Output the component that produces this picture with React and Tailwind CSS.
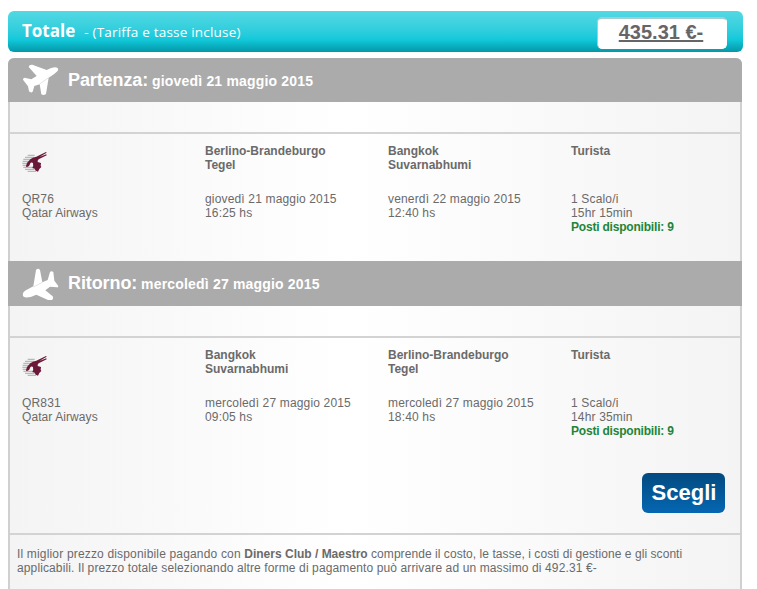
import React from 'react';

const flights = [
    {
        id: 'out',
        label: 'Partenza:',
        date: 'giovedì 21 maggio 2015',
        code: 'QR76',
        airline: 'Qatar Airways',
        from: ['Berlino-Brandeburgo', 'Tegel'],
        to: ['Bangkok', 'Suvarnabhumi'],
        departure: ['giovedì 21 maggio 2015', '16:25 hs'],
        arrival: ['venerdì 22 maggio 2015', '12:40 hs'],
        cabin: 'Turista',
        stops: '1 Scalo/i',
        duration: '15hr 15min',
        seats: 9,
    },
    {
        id: 'back',
        label: 'Ritorno:',
        date: 'mercoledì 27 maggio 2015',
        code: 'QR831',
        airline: 'Qatar Airways',
        from: ['Bangkok', 'Suvarnabhumi'],
        to: ['Berlino-Brandeburgo', 'Tegel'],
        departure: ['mercoledì 27 maggio 2015', '09:05 hs'],
        arrival: ['mercoledì 27 maggio 2015', '18:40 hs'],
        cabin: 'Turista',
        stops: '1 Scalo/i',
        duration: '14hr 35min',
        seats: 9,
    },
];

const TakeOffIcon = () => (
    <svg className="h-[32px] w-[37px]" viewBox="0 0 111 96" fill="#fff">
        <path d="M107 12 Q111 17 106 22 Q98 31 80 41 L72 90 Q65 96 58 91 L53 61 L37 66 L32 83 Q27 88 21 82 L18 67 L3 47 Q4 39 11 42 L28 46 L44 36 L20 9 Q21 1 31 2 L74 18 Q97 5 107 12 Z" />
        <path d="M53 60 L80 41" stroke="#c8c8c8" strokeWidth="1.5" fill="none" />
    </svg>
);

const LandingIcon = () => (
    <svg className="h-[32px] w-[37px]" viewBox="0 0 111 96" fill="#fff">
        <path d="M3 83 Q0 73 13 66 L34 55 L42 6 Q48 -1 54 6 L61 43 L77 36 L84 12 Q89 7 94 12 L97 38 L109 54 Q109 59 104 58 L84 56 L70 67 L92 85 Q96 93 89 96 L78 96 L43 80 Q23 90 9 88 Q4 87 3 83 Z" />
        <path d="M34 57 L61 43" stroke="#c8c8c8" strokeWidth="1.5" fill="none" />
    </svg>
);

const QatarLogo = () => (
    <svg className="h-[22px] w-[26px]" viewBox="0 0 78 66">
        <path
            d="M17 13 H38 M9 19 H35 M4 25 H30 M2 31 H24 M1 37 H22 M2 43 H18 M4 49 H34 M9 55 H38 M17 61 H42"
            stroke="#b4bab8"
            strokeWidth="3.5"
        />
        <path
            d="M12 46 Q14 34 25 25 Q34 17 43 17 L72 3 L74 5 L52 18 L73 10 L74 13 L50 25 Q46 28 47 33 L57 36 L56 44 L58 48 L52 54 L48 62 L41 59 L38 53 L31 51 Q35 44 33 36 Q28 32 24 38 Q23 46 13 48 Z"
            fill="#6b1738"
        />
    </svg>
);

const FlightHeader = ({ flight }) => (
    <div className={`-mx-[2px] flex items-center bg-[#ababab] pl-[14px] text-white ${flight.id === 'out' ? 'h-[44px] rounded-t-[6px]' : 'h-[45px]'}`}>
        {flight.id === 'out' ? <TakeOffIcon /> : <LandingIcon />}
        <h2 className="ml-[9px] text-[18px] leading-[22px] font-bold tracking-[-0.1px]">
            {flight.label} <span className="-ml-px text-[14px] tracking-[0.18px]">{flight.date}</span>
        </h2>
    </div>
);

const Lines = ({ lines }) => lines.map((line) => <p key={line}>{line}</p>);

const FlightRow = ({ flight }) => (
    <div className="grid grid-cols-[183px_183px_183px_1fr] pt-[10px] pl-[12px] tracking-[0.16px]">
        <div>
            <div className="h-[48px] pt-[7px]">
                <QatarLogo />
            </div>
            <p>{flight.code}</p>
            <p className="tracking-[0.08px]">{flight.airline}</p>
        </div>
        <div>
            <div className="h-[48px] font-bold tracking-normal">
                <Lines lines={flight.from} />
            </div>
            <Lines lines={flight.departure} />
        </div>
        <div>
            <div className="h-[48px] font-bold tracking-normal">
                <Lines lines={flight.to} />
            </div>
            <Lines lines={flight.arrival} />
        </div>
        <div>
            <div className="h-[48px] font-bold tracking-normal">{flight.cabin}</div>
            <p>{flight.stops}</p>
            <p>{flight.duration}</p>
            <p className="font-bold tracking-[-0.2px] text-[#20853a]">Posti disponibili: {flight.seats}</p>
        </div>
    </div>
);

const App = () => {
    return (
        <div className="h-[589px] overflow-hidden bg-white pt-[11px] pl-[8px] font-['Liberation_Sans',Arial,sans-serif] text-[12px] leading-[14px] text-[#6a6a6a]">
            {/* Total bar */}
            <div className="flex h-[41px] w-[735px] items-center justify-between rounded-[6px] bg-linear-to-b from-[#52d8e3] via-[#10c9da] via-70% to-[#0597a8] pr-[16px] pl-[14px]">
                <p className="font-['Open_Sans','Noto_Sans',sans-serif] text-white">
                    <span className="text-[17px] font-bold">Totale</span>
                    <span className="ml-[9px] text-[13.5px] font-medium tracking-[0.2px]">- (Tariffa e tasse incluse)</span>
                </p>
                <div className="mt-[2px] h-[32px] w-[130px] rounded-[5px] border border-t-2 border-[#a5cdd1] border-r-white border-b-white bg-white pr-[2px] text-center text-[20px] leading-[27px] font-bold text-[#666]">
                    <span className="underline">435.31 €-</span>
                </div>
            </div>

            {/* Flights */}
            <div className="mt-[6px] h-[540px] w-[734px] rounded-t-[6px] border-x-2 border-[#d0d0d0] bg-linear-to-r from-[#f4f4f4] via-white via-46% to-[#f4f4f4]">
                {flights.map((flight) => (
                    <section key={flight.id}>
                        <FlightHeader flight={flight} />
                        <div className="h-[32px] border-b-2 border-[#d3d3d3]" />
                        <div className={flight.id === 'out' ? 'h-[127px]' : 'h-[135px]'}>
                            <FlightRow flight={flight} />
                        </div>
                    </section>
                ))}

                <div className="flex h-[62px] justify-end border-b-2 border-[#d3d3d3] pr-[15px]">
                    <button className="h-[40px] w-[83px] rounded-[6px] bg-linear-to-b from-[#034a80] to-[#0567b2] pl-px text-[22px] leading-[38px] font-bold text-white">
                        Scegli
                    </button>
                </div>

                <p className="pt-[12px] pl-[7px] whitespace-nowrap">
                    <span className="tracking-[0.17px]">Il miglior prezzo disponibile pagando con </span>
                    <strong>Diners Club / Maestro</strong>
                    <span className="tracking-[0.06px]"> comprende il costo, le tasse, i costi di gestione e gli sconti</span>
                    <br />
                    <span className="tracking-[0.12px]">applicabili. Il prezzo totale selezionando altre forme di pagamento può arrivare ad un massimo di 492.31 €-</span>
                </p>
            </div>
        </div>
    );
};

export default App;
